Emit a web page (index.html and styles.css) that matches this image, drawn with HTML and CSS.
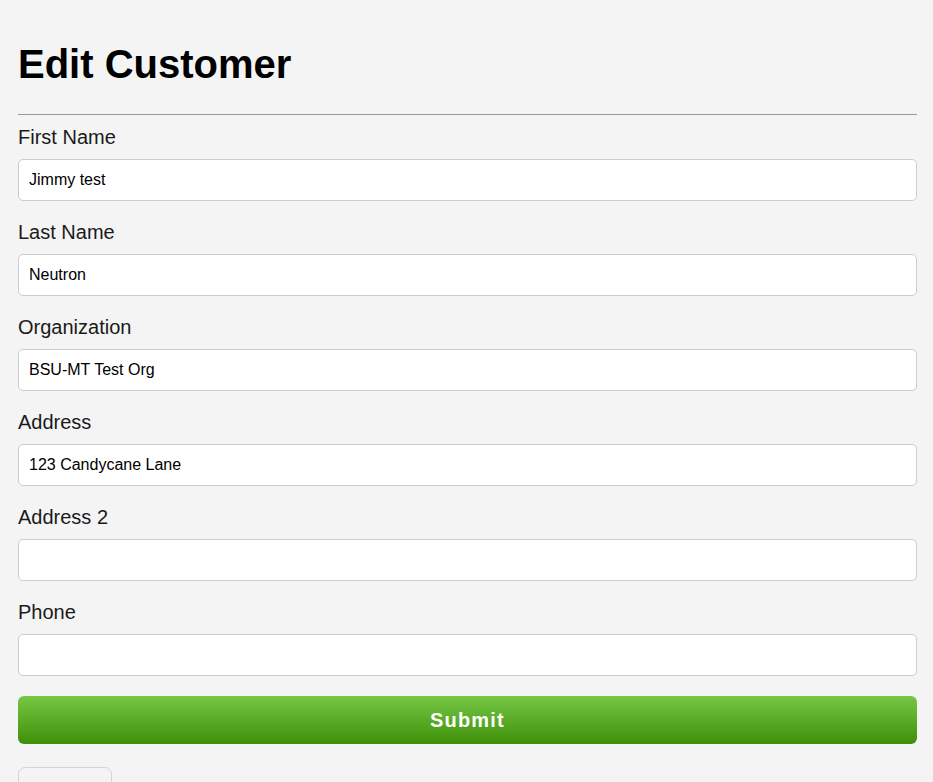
FILE: index.html
```html
<!DOCTYPE html>
<html lang="en">
<head>
<meta charset="utf-8">
<title>Edit Customer</title>
<link rel="stylesheet" href="styles.css">
</head>
<body>
<main class="page">
  <h1 class="title">Edit Customer</h1>
  <hr class="rule">
  <form class="form">
    <div class="field">
      <label class="label" for="fn">First Name</label>
      <input class="input" id="fn" type="text" value="Jimmy test">
    </div>
    <div class="field">
      <label class="label" for="ln">Last Name</label>
      <input class="input" id="ln" type="text" value="Neutron">
    </div>
    <div class="field">
      <label class="label" for="org">Organization</label>
      <input class="input" id="org" type="text" value="BSU-MT Test Org">
    </div>
    <div class="field">
      <label class="label" for="addr">Address</label>
      <input class="input" id="addr" type="text" value="123 Candycane Lane">
    </div>
    <div class="field">
      <label class="label" for="addr2">Address 2</label>
      <input class="input" id="addr2" type="text" value="">
    </div>
    <div class="field">
      <label class="label" for="phone">Phone</label>
      <input class="input" id="phone" type="text" value="">
    </div>
    <button class="submit" type="button">Submit</button>
  </form>
  <div class="secondary"></div>
</main>
</body>
</html>
```

FILE: styles.css
```css
html, body {
  margin: 0;
  padding: 0;
  background: #f4f4f4;
}
body {
  font-family: "Liberation Sans", Arial, sans-serif;
  color: #111;
}
.page {
  padding: 0 16px 0 18px;
}
.title {
  margin: 41px 0 0;
  font-size: 40px;
  line-height: 46px;
  font-weight: bold;
  color: #000;
}
.rule {
  margin: 27px 0 11px;
  border: 0;
  border-top: 1px solid #999;
  height: 0;
}
.form {
  display: flex;
  flex-direction: column;
  gap: 20px;
}
.field {
  display: flex;
  flex-direction: column;
  gap: 10px;
}
.label {
  font-size: 20px;
  line-height: 23px;
  color: #1a1a1a;
}
.input {
  box-sizing: border-box;
  height: 42px;
  width: 100%;
  margin: 0;
  padding: 0 10px;
  border: 1px solid #ccc;
  border-radius: 5px;
  background: #fff;
  font-family: "Liberation Sans", Arial, sans-serif;
  font-size: 16px;
  color: #000;
}
.submit {
  height: 48px;
  width: 100%;
  margin: 0;
  border: 0;
  border-radius: 6px;
  background: linear-gradient(to bottom, #76c845, #3e8f08);
  color: #fff;
  font-family: "Liberation Sans", Arial, sans-serif;
  font-size: 20px;
  font-weight: bold;
  letter-spacing: 1.2px;
}
.secondary {
  margin-top: 23px;
  width: 94px;
  height: 40px;
  box-sizing: border-box;
  border: 1px solid #d4d4d4;
  border-radius: 7px;
  background: #f4f4f4;
}
```
